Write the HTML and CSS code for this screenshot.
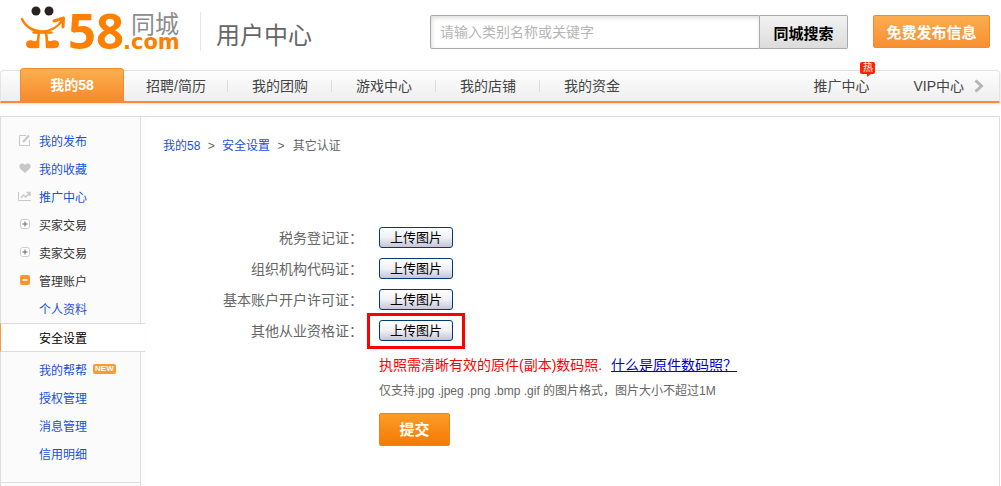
FILE: index.html
```html
<!DOCTYPE html>
<html lang="zh-CN">

<head>
    <meta charset="utf-8">
    <title>用户中心 - 58同城</title>
    <link rel="stylesheet" href="styles.css">
</head>

<body>
    <header class="header">
        <a class="logo" href="#" aria-label="58同城">
            <svg width="162" height="56" viewBox="0 0 162 56">
                <circle cx="16" cy="7" r="4.5" fill="#2b2320" />
                <circle cx="29" cy="7" r="4.5" fill="#2b2320" />
                <g fill="none" stroke="#ff8000" stroke-linecap="round" stroke-linejoin="round">
                    <path d="M2 15 C9 31 33 32 43 15" stroke-width="2.4" />
                    <path d="M34 17 L43.500 14 L43 23" stroke-width="3" />
                    <path d="M13.500 28.500 H31.500" stroke-width="2.4" />
                    <path d="M19 29 Q18 34 18 43 H11 C6 43 6 37.500 11 37.500 L15 39 L18 37" stroke-width="2.6" />
                    <path d="M26 29 Q27 34 27 43 H34 C39 43 39 37.500 34 37.500 L30 39 L27 37" stroke-width="2.6" />
                </g>
                <ellipse cx="12" cy="40.500" rx="5" ry="3.500" fill="#ff8000" />
                <ellipse cx="33" cy="40.500" rx="5" ry="3.500" fill="#ff8000" />
                <text class="logo-num" x="48" y="45">58</text>
                <text class="logo-city" x="111" y="29">同城</text>
                <text class="logo-com" x="103" y="45">.com</text>
            </svg>
        </a>
        <h1 class="title">用户中心</h1>
        <form class="search">
            <input type="text" class="search-text" placeholder="请输入类别名称或关键字" aria-label="搜索">
            <button type="submit" class="search-btn">同城搜索</button>
        </form>
        <button type="button" class="publish">免费发布信息</button>
    </header>

    <nav class="nav">
        <a class="on" href="#">我的58</a>
        <a href="#">招聘/简历</a>
        <a href="#">我的团购</a>
        <a href="#">游戏中心</a>
        <a href="#">我的店铺</a>
        <a href="#">我的资金</a>
        <div class="nav-right">
            <a class="hot" href="#">推广中心<span class="hot-tag">热</span></a>
            <a href="#">VIP中心</a>
            <svg class="more" width="10" height="14" viewBox="0 0 10 14"><path d="M1.500 1.500 L7.500 7 L1.500 12.500" fill="none" stroke="#b5b5b5" stroke-width="3" /></svg>
        </div>
    </nav>

    <div class="main">
        <aside class="side">
            <ul class="menu">
                <li><a href="#">
                    <svg width="12" height="12" viewBox="0 0 12 12" fill="none" stroke="#c8c8c8"><path d="M7 1.500 H.5 V11.500 H10.500 V6" /><path d="M4 8 L10 1.500" stroke-width="2.200" /></svg>
                    我的发布</a></li>
                <li><a href="#">
                    <svg width="12" height="12" viewBox="0 0 12 12" fill="#c8c8c8"><path d="M6 11 L1.500 7 C-1 4 1 1 3.500 1.500 C5 1.700 5.500 2.500 6 3 C6.500 2.500 7 1.700 8.500 1.500 C11 1 13 4 10.500 7 Z" /></svg>
                    我的收藏</a></li>
                <li><a href="#">
                    <svg width="14" height="12" viewBox="0 0 14 12" fill="none" stroke="#c8c8c8"><path d="M.5 2 V10.500 H13" /><path d="M3 8 L5.500 5 L8 7 L11.500 3 M8.500 2.500 H12 V6" stroke-width="1.400" /></svg>
                    推广中心</a></li>
                <li><a class="group" href="#">
                    <svg width="10" height="10" viewBox="0 0 10 10" fill="none"><rect x=".5" y=".5" width="9" height="9" rx="2" fill="#fff" stroke="#ccc" /><path d="M2.500 5 H7.500 M5 2.500 V7.500" stroke="#666" /></svg>
                    买家交易</a></li>
                <li><a class="group" href="#">
                    <svg width="10" height="10" viewBox="0 0 10 10" fill="none"><rect x=".5" y=".5" width="9" height="9" rx="2" fill="#fff" stroke="#ccc" /><path d="M2.500 5 H7.500 M5 2.500 V7.500" stroke="#666" /></svg>
                    卖家交易</a></li>
                <li><a class="group" href="#">
                    <svg width="10" height="10" viewBox="0 0 10 10"><rect width="10" height="10" rx="2" fill="#f7962f" /><path d="M2.500 5 H7.500" stroke="#fff" stroke-width="1.500" /></svg>
                    管理账户</a></li>
                <li><a href="#">个人资料</a></li>
                <li class="current"><a href="#">安全设置</a></li>
                <li><a href="#">我的帮帮<span class="new">NEW</span></a></li>
                <li><a href="#">授权管理</a></li>
                <li><a href="#">消息管理</a></li>
                <li><a href="#">信用明细</a></li>
            </ul>
        </aside>

        <div class="content">
            <div class="crumb">
                <a href="#">我的58</a>
                <span>&gt;</span>
                <a href="#">安全设置</a>
                <span>&gt;</span>
                其它认证
            </div>
            <form class="cert">
                <div class="row">
                    <label for="tax">税务登记证：</label>
                    <button type="button" class="upload" id="tax">上传图片</button>
                </div>
                <div class="row">
                    <label for="org">组织机构代码证：</label>
                    <button type="button" class="upload" id="org">上传图片</button>
                </div>
                <div class="row">
                    <label for="bank">基本账户开户许可证：</label>
                    <button type="button" class="upload" id="bank">上传图片</button>
                </div>
                <div class="row">
                    <label for="other">其他从业资格证：</label>
                    <span class="mark"><button type="button" class="upload" id="other">上传图片</button></span>
                </div>
                <div class="notes">
                    <p class="warn">执照需清晰有效的原件(副本)数码照. <a href="#">什么是原件数码照？</a></p>
                    <p class="hint">仅支持.jpg .jpeg .png .bmp .gif 的图片格式，图片大小不超过1M</p>
                    <button type="submit" class="submit">提交</button>
                </div>
            </form>
        </div>
    </div>
</body>
</html>
```
FILE: styles.css
```css
* {
    box-sizing: border-box;
}

body {
    margin: 0;
    min-height: 100vh;
    display: flex;
    flex-direction: column;
    font-family: "Liberation Sans", "Noto Sans CJK SC", sans-serif;
    font-size: 12px;
    color: #666;
    background: #fff;
}

a {
    color: #1a4fdb;
    text-decoration: none;
}

button {
    font-family: inherit;
    padding: 0;
    cursor: pointer;
    white-space: nowrap;
}

/* header */
.header {
    display: flex;
    align-items: flex-start;
    height: 68px;
    padding: 0 11px 0 20px;
}

.logo {
    padding-top: 4px;
}

.logo svg {
    display: block;
    overflow: visible;
}

.logo-num {
    font: bold 49px "Open Sans", sans-serif;
    fill: #ff8000;
}

.logo-com {
    font: bold 21px "DejaVu Sans", sans-serif;
    fill: #ff8000;
}

.logo-city {
    font: 24px "Noto Sans CJK SC", sans-serif;
    fill: #8c8c8c;
}

.title {
    margin: 12px 0 0 18px;
    padding-left: 15px;
    border-left: 1px solid #e5e5e5;
    font-size: 24px;
    font-weight: normal;
    line-height: 48px;
    height: 39px;
    color: #666;
}

.search {
    display: flex;
    margin: 15px 25px 0 auto;
}

.search-text {
    width: 330px;
    height: 34px;
    padding: 0 9px;
    border: 1px solid #a9a9a9;
    border-radius: 2px 0 0 2px;
    box-shadow: inset 1px 2px 4px #ddd;
    font-family: inherit;
    font-size: 14px;
}

.search-text::placeholder {
    color: #b5b5b5;
}

.search-btn {
    width: 88px;
    height: 34px;
    border: 1px solid #a9a9a9;
    border-left: none;
    border-radius: 0 2px 2px 0;
    background: linear-gradient(#f2f2f2, #dcdcdc);
    font-size: 15px;
    font-weight: bold;
    color: #000;
}

.publish {
    width: 117px;
    height: 33px;
    margin-top: 15px;
    border: 1px solid #f28a2e;
    border-radius: 2px;
    background: linear-gradient(#fbad4e, #f88f31);
    font-size: 15px;
    font-weight: bold;
    color: #fff;
}

/* nav */
.nav {
    display: flex;
    align-items: flex-end;
    height: 33px;
    margin: 2px 1px 13px 0;
    padding-left: 19px;
    border: 1px solid #e3e3e3;
    border-bottom: 2px solid #f68b3a;
    border-radius: 4px 4px 0 0;
    background: linear-gradient(#fdfdfd, #eee);
    box-shadow: 0 1px 3px #ddd;
}

.nav a {
    width: 104px;
    line-height: 30px;
    text-align: center;
    font-size: 14px;
    color: #444;
}

.nav > a + a {
    background: linear-gradient(#ddd, #ddd) right center / 1px 12px no-repeat;
}

.nav > a:last-of-type {
    background: none;
}

.nav .on {
    height: 33px;
    line-height: 32px;
    flex-shrink: 0;
    border: 1px solid #f28a2e;
    border-bottom: none;
    border-radius: 4px 4px 0 0;
    background: linear-gradient(#fcaf4f, #f68a2c);
    font-weight: bold;
    color: #fff;
}

.nav-right {
    display: flex;
    align-items: center;
    gap: 10px;
    margin-left: auto;
    padding-right: 15px;
}

.nav-right a {
    width: auto;
}

.nav-right .hot {
    position: relative;
    margin-right: 34px;
}

.hot-tag {
    position: absolute;
    top: -9px;
    right: -6px;
    width: 15px;
    height: 12px;
    border-radius: 2px;
    background: #f20;
    font-size: 10px;
    line-height: 12px;
    color: #fff;
}

.hot-tag::after {
    content: "";
    position: absolute;
    top: 12px;
    left: 7px;
    border-top: 3px solid #f20;
    border-right: 4px solid transparent;
}

/* main */
.main {
    flex: 1;
    display: flex;
    margin-right: 1px;
    border: 1px solid #ddd;
    border-bottom: none;
}

.side {
    width: 145px;
    flex-shrink: 0;
    background: linear-gradient(90deg, #fbfbfb 139px, #ddd 139px, #ddd 140px, #fdfdfd 140px);
}

.menu {
    list-style: none;
    width: 140px;
    margin: 0;
    padding: 10px 0 14px;
    border-bottom: 1px solid #ddd;
}

.menu a {
    display: flex;
    align-items: center;
    height: 28px;
    padding-left: 38px;
    padding-bottom: 2px;
}

.menu svg {
    width: 14px;
    margin-left: -21px;
    margin-right: 7px;
}

.menu .group {
    color: #333;
}

.menu .current {
    width: 145px;
    margin-left: -1px;
    margin-bottom: 4px;
    border: 1px solid #ddd;
    border-left: 1px solid #f93;
    border-right: none;
    background: #fff;
}

.menu .current a {
    height: 27px;
    padding-bottom: 0;
    color: #000;
}

.new {
    margin-left: 6px;
    padding: 0 2px;
    border-radius: 2px;
    background: #f93;
    font-size: 8px;
    font-weight: bold;
    line-height: 10px;
    color: #fff;
}

/* content */
.content {
    flex: 1;
    padding: 20px 17px;
}

.crumb {
    line-height: 18px;
}

.crumb span {
    margin: 0 4px;
}

.crumb span:last-of-type {
    margin-right: 5px;
}

.cert {
    margin-top: 67px;
}

.row {
    display: flex;
    align-items: center;
    height: 31px;
}

.row label {
    width: 200px;
    margin-right: 16px;
    padding-bottom: 2px;
    text-align: right;
    font-size: 14px;
}

.upload {
    display: block;
    width: 74px;
    height: 21px;
    border: 1px solid #003c74;
    border-radius: 3px;
    background: linear-gradient(#fff, #f0f0f6 50%, #c5c5d8);
    font-size: 13px;
    line-height: 18px;
    color: #000;
}

.mark {
    position: relative;
}

.mark::after {
    content: "";
    position: absolute;
    inset: -7px -12px -8px;
    border: 3px solid #f00;
    pointer-events: none;
}

.notes {
    padding-left: 216px;
}

.notes p {
    margin: 0;
}

.warn {
    padding-top: 7px;
    font-size: 14px;
    line-height: 24px;
    color: #f00;
}

.warn a {
    margin-left: 5px;
    color: #00c;
    text-decoration: underline;
}

.hint {
    line-height: 28px;
}

.submit {
    width: 71px;
    height: 33px;
    margin-top: 8px;
    border: 1px solid #f0821a;
    border-radius: 2px;
    background: linear-gradient(#fb9c26, #f57a05);
    font-size: 15px;
    font-weight: bold;
    line-height: 30px;
    color: #fff;
}
```
